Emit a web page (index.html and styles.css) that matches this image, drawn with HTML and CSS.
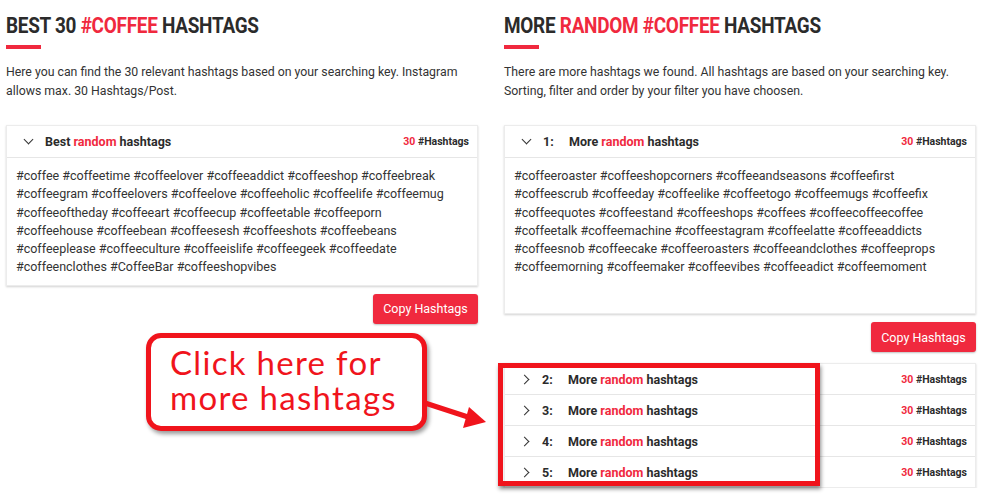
FILE: index.html
```html
<!DOCTYPE html>
<html lang="en">
<head>
  <meta charset="UTF-8">
  <meta name="viewport" content="width=device-width, initial-scale=1.0">
  <title>Coffee Hashtags</title>
  <link rel="stylesheet" href="styles.css">
</head>
<body>
  <div class="page">
    <!-- left column: best 30 -->
    <section class="col">
      <h2 class="title"><span class="squeeze">BEST 30 <span class="hl">#COFFEE</span> HASHTAGS</span></h2>
      <div class="bar"></div>
      <p class="intro">Here you can find the 30 relevant hashtags based on your searching key. Instagram allows max. 30 Hashtags/Post.</p>

      <div class="card">
        <div class="card-head">
          <span class="chev down"></span>
          <span class="head-title">Best <span class="hl">random</span> hashtags</span>
          <span class="count"><span class="hl">30</span> #Hashtags</span>
        </div>
        <div class="card-body">#coffee #coffeetime #coffeelover #coffeeaddict #coffeeshop #coffeebreak<br>#coffeegram #coffeelovers #coffeelove #coffeeholic #coffeelife #coffeemug<br>#coffeeoftheday #coffeeart #coffeecup #coffeetable #coffeeporn<br>#coffeehouse #coffeebean #coffeesesh #coffeeshots #coffeebeans<br>#coffeeplease #coffeeculture #coffeeislife #coffeegeek #coffeedate<br>#coffeenclothes #CoffeeBar #coffeeshopvibes</div>
      </div>
      <div class="actions"><button class="btn">Copy Hashtags</button></div>
    </section>

    <!-- right column: more random -->
    <section class="col">
      <h2 class="title"><span class="squeeze">MORE <span class="hl">RANDOM #COFFEE</span> HASHTAGS</span></h2>
      <div class="bar"></div>
      <p class="intro">There are more hashtags we found. All hashtags are based on your searching key. Sorting, filter and order by your filter you have choosen.</p>

      <div class="card">
        <div class="card-head">
          <span class="chev down"></span>
          <span class="num">1:</span>
          <span class="head-title">More <span class="hl">random</span> hashtags</span>
          <span class="count"><span class="hl">30</span> #Hashtags</span>
        </div>
        <div class="card-body tall">#coffeeroaster #coffeeshopcorners #coffeeandseasons #coffeefirst<br>#coffeescrub #coffeeday #coffeelike #coffeetogo #coffeemugs #coffeefix<br>#coffeequotes #coffeestand #coffeeshops #coffees #coffeecoffeecoffee<br>#coffeetalk #coffeemachine #coffeestagram #coffeelatte #coffeeaddicts<br>#coffeesnob #coffeecake #coffeeroasters #coffeeandclothes #coffeeprops<br>#coffeemorning #coffeemaker #coffeevibes #coffeeadict #coffeemoment</div>
      </div>
      <div class="actions"><button class="btn">Copy Hashtags</button></div>

      <div class="card list">
        <div class="card-head row"><span class="chev right"></span><span class="num">2:</span><span class="head-title">More <span class="hl">random</span> hashtags</span><span class="count"><span class="hl">30</span> #Hashtags</span></div>
        <div class="card-head row"><span class="chev right"></span><span class="num">3:</span><span class="head-title">More <span class="hl">random</span> hashtags</span><span class="count"><span class="hl">30</span> #Hashtags</span></div>
        <div class="card-head row"><span class="chev right"></span><span class="num">4:</span><span class="head-title">More <span class="hl">random</span> hashtags</span><span class="count"><span class="hl">30</span> #Hashtags</span></div>
        <div class="card-head row"><span class="chev right"></span><span class="num">5:</span><span class="head-title">More <span class="hl">random</span> hashtags</span><span class="count"><span class="hl">30</span> #Hashtags</span></div>
      </div>
    </section>
  </div>

  <!-- annotation drawn over the page -->
  <div class="callout"><div class="line">Click here for</div><div class="line">more hashtags</div></div>
  <svg class="arrow" width="80" height="40" viewBox="0 0 80 40">
    <line x1="0" y1="8" x2="46" y2="23" stroke="#f0141c" stroke-width="5"/>
    <polygon points="61,27 44,12 38,33" fill="#f0141c"/>
  </svg>
  <div class="frame"></div>
</body>
</html>
```

FILE: styles.css
```css
body {
  margin: 0;
  font-family: Roboto, "Liberation Sans", sans-serif;
  color: #333;
  background: #fff;
}

.page {
  display: grid;
  grid-template-columns: 472px 472px;
  column-gap: 26px;
  padding: 0 7px 0 6px;
}

.hl {
  color: #f0293e;
}

.title {
  margin: 0;
  padding-top: 13px;
  font-size: 22px;
  line-height: 26px;
  font-weight: 700;
  white-space: nowrap;
  color: #2b2b2b;
}

/* condensed headline look */
.squeeze {
  display: inline-block;
  letter-spacing: -0.3px;
  transform: scaleX(0.86);
  transform-origin: left center;
}

.bar {
  width: 35px;
  height: 4px;
  margin-top: 6px;
  background: #f0293e;
}

.intro {
  margin: 14px 0 0;
  font-size: 12.3px;
  line-height: 19px;
  color: #333;
}

.card {
  margin-top: 24px;
  background: #fff;
  border: 1px solid #ececec;
  box-shadow: 0 1px 2px rgba(0, 0, 0, 0.18);
}

.card-head {
  display: flex;
  align-items: center;
  height: 31px;
  padding: 0 8px 0 18px;
  border-bottom: 1px solid #e6e6e6;
  font-size: 12.5px;
  font-weight: 700;
  color: #2b2b2b;
}

.chev {
  display: inline-block;
  width: 6px;
  height: 6px;
  border-right: 1.6px solid #333;
  border-bottom: 1.6px solid #333;
}

.chev.down {
  transform: rotate(45deg);
  margin: -4px 13px 0 0;
}

.chev.right {
  transform: rotate(-45deg);
  margin: 0 14px 0 -2px;
}

.num {
  width: 26px;
}

.head-title {
  flex: 1;
}

.count {
  font-size: 10.5px;
}

.card-body {
  padding: 9px 9px 8px;
  font-size: 12.5px;
  line-height: 18.3px;
  white-space: nowrap;
  color: #333;
}

.card-body.tall {
  min-height: 138px;
}

.actions {
  display: flex;
  justify-content: flex-end;
  margin-top: 8px;
}

.btn {
  width: 105px;
  height: 30px;
  border: none;
  border-radius: 3px;
  background: #f0293e;
  color: #fff;
  font-family: Roboto, "Liberation Sans", sans-serif;
  font-size: 12.5px;
  box-shadow: 0 1px 2px rgba(0, 0, 0, 0.25);
}

.card.list {
  margin-top: 11px;
}

.card-head.row {
  height: 30px;
}

.card-head.row:last-child {
  border-bottom: none;
}

/* annotation overlay */
.callout {
  position: absolute;
  left: 146px;
  top: 333px;
  width: 281px;
  height: 98px;
  box-sizing: border-box;
  padding: 7px 0 0 19px;
  border: 5px solid #f0141c;
  border-radius: 15px;
  background: #fff;
  box-shadow: 2px 3px 4px rgba(0, 0, 0, 0.4);
  font-family: Lato, "Open Sans", sans-serif;
  font-size: 33px;
  letter-spacing: 1.3px;
  color: #f0141c;
}

.callout .line {
  height: 35px;
  line-height: 35px;
}

.arrow {
  position: absolute;
  left: 425px;
  top: 395px;
}

.frame {
  position: absolute;
  left: 498px;
  top: 363px;
  width: 322px;
  height: 123px;
  box-sizing: border-box;
  border: 5px solid #f0141c;
  box-shadow: 1px 3px 4px rgba(0, 0, 0, 0.45);
}
```
